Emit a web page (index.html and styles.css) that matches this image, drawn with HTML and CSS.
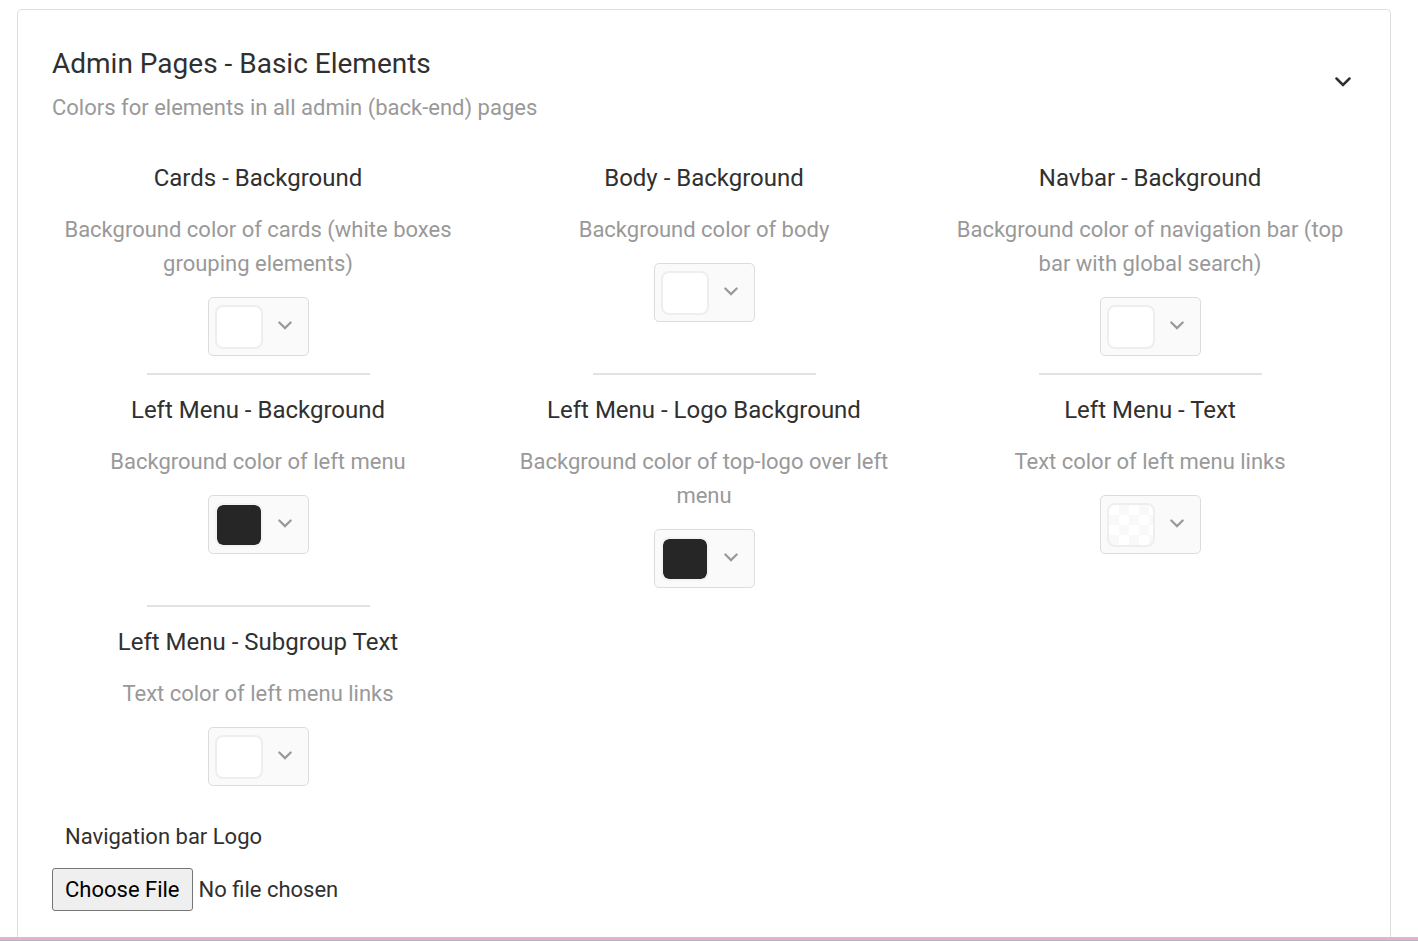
FILE: index.html
```html
<!DOCTYPE html>
<html lang="en">
<head>
<meta charset="utf-8">
<meta name="viewport" content="width=device-width, initial-scale=1">
<title>Admin Pages - Basic Elements</title>
<link rel="stylesheet" href="styles.css">
</head>
<body>
<svg class="sprite" aria-hidden="true">
  <symbol id="chevron" viewBox="0 0 16 10"><path d="M1.500 1.500 8 8l6.500-6.500" fill="none" stroke="currentColor" stroke-width="2.500" stroke-linecap="round"/></symbol>
</svg>
<main class="card">
  <header class="card-header">
    <div>
      <h1 class="card-title">Admin Pages - Basic Elements</h1>
      <p class="card-subtitle">Colors for elements in all admin (back-end) pages</p>
    </div>
    <button class="collapse" type="button" aria-label="Collapse section"><svg class="collapse-icon"><use href="#chevron"/></svg></button>
  </header>
  <div class="options">
    <section class="option">
      <h2 class="option-title">Cards - Background</h2>
      <p class="option-text">Background color of cards (white boxes grouping elements)</p>
      <button class="picker" type="button" aria-label="Cards background color"><span class="swatch"></span><svg class="picker-icon"><use href="#chevron"/></svg></button>
      <hr class="divider">
    </section>
    <section class="option">
      <h2 class="option-title">Body - Background</h2>
      <p class="option-text">Background color of body</p>
      <button class="picker" type="button" aria-label="Body background color"><span class="swatch"></span><svg class="picker-icon"><use href="#chevron"/></svg></button>
      <hr class="divider">
    </section>
    <section class="option">
      <h2 class="option-title">Navbar - Background</h2>
      <p class="option-text">Background color of navigation bar (top bar with global search)</p>
      <button class="picker" type="button" aria-label="Navbar background color"><span class="swatch"></span><svg class="picker-icon"><use href="#chevron"/></svg></button>
      <hr class="divider">
    </section>
    <section class="option">
      <h2 class="option-title">Left Menu - Background</h2>
      <p class="option-text">Background color of left menu</p>
      <button class="picker" type="button" aria-label="Left menu background color"><span class="swatch swatch-dark"></span><svg class="picker-icon"><use href="#chevron"/></svg></button>
      <hr class="divider">
    </section>
    <section class="option">
      <h2 class="option-title">Left Menu - Logo Background</h2>
      <p class="option-text">Background color of top-logo over left menu</p>
      <button class="picker" type="button" aria-label="Logo background color"><span class="swatch swatch-dark"></span><svg class="picker-icon"><use href="#chevron"/></svg></button>
    </section>
    <section class="option">
      <h2 class="option-title">Left Menu - Text</h2>
      <p class="option-text">Text color of left menu links</p>
      <button class="picker" type="button" aria-label="Left menu text color"><span class="swatch swatch-clear"></span><svg class="picker-icon"><use href="#chevron"/></svg></button>
    </section>
    <section class="option">
      <h2 class="option-title">Left Menu - Subgroup Text</h2>
      <p class="option-text">Text color of left menu links</p>
      <button class="picker" type="button" aria-label="Subgroup text color"><span class="swatch"></span><svg class="picker-icon"><use href="#chevron"/></svg></button>
    </section>
  </div>
  <div class="upload">
    <label class="upload-label" for="logo">Navigation bar Logo</label>
    <input class="upload-input" id="logo" type="file">
  </div>
</main>
<div class="bottom-bar"></div>
</body>
</html>
```
FILE: styles.css
```css
* {
  box-sizing: border-box;
}

body {
  margin: 0;
  min-height: 100vh;
  display: flex;
  flex-direction: column;
  background: #fff;
  color: #303030;
  font-family: Roboto, sans-serif;
  font-size: 22px;
  line-height: 34px;
}

h1, h2, p {
  margin: 0;
  font-weight: 400;
}

.sprite {
  position: absolute;
  width: 0;
  height: 0;
}

.card {
  flex: 1;
  margin: 9px 27px 0 17px;
  padding: 34px 17px 26px;
  border: 1px solid #dedede;
  border-bottom: 0;
  border-radius: 5px 5px 0 0;
}

.card-header {
  display: flex;
  justify-content: space-between;
  align-items: center;
  padding: 0 17px;
  margin-bottom: 36px;
}

.card-title {
  font-size: 28px;
  line-height: 40px;
  margin-bottom: 7px;
}

.card-subtitle,
.option-text {
  color: #999;
}

.collapse {
  display: flex;
  padding: 12px 5px 18px;
  border: 0;
  background: none;
  color: #303030;
}

.collapse-icon {
  width: 16px;
  height: 10px;
}

.options {
  display: grid;
  grid-template-columns: repeat(3, 1fr);
  row-gap: 18px;
}

.option {
  display: flex;
  flex-direction: column;
  align-items: center;
  padding: 0 13px;
  text-align: center;
}

.option-title {
  font-size: 24px;
  margin-bottom: 18px;
}

.option-text {
  margin-bottom: 16px;
}

.picker {
  display: flex;
  align-items: center;
  gap: 15px;
  height: 59px;
  margin-bottom: 17px;
  padding: 0 16px 0 6px;
  border: 1px solid #dcdcdc;
  border-radius: 5px;
  background: #fafafa;
  color: #999;
}

.picker:last-child {
  margin-bottom: 19px;
}

.picker-icon {
  width: 14px;
  height: 9px;
  margin-bottom: 3px;
}

.swatch {
  width: 48px;
  height: 44px;
  border: 2px solid #eee;
  border-radius: 8px;
  background: #fff;
}

.swatch-dark {
  border-color: #f3f3f3;
  background: #262626 padding-box;
}

.swatch-clear {
  background: repeating-conic-gradient(#f9f9f9 0 25%, #fff 0 50%) 0 0 / 20px 20px;
}

.divider {
  width: calc(50% + 13px);
  height: 2px;
  margin: auto 0 0;
  border: 0;
  background: #e2e2e2;
}

.upload {
  padding: 0 17px;
  margin-top: 15px;
}

.upload-label {
  display: block;
  padding-left: 13px;
  margin-bottom: 14px;
}

.upload-input {
  display: block;
  width: 100%;
  font: inherit;
  color: inherit;
}

.upload-input::file-selector-button {
  height: 43px;
  padding: 0 12px;
  margin-right: 6px;
  border: 1px solid #767676;
  border-radius: 3px;
  background: #efefef;
  color: #000;
  font: inherit;
}

.bottom-bar {
  height: 4px;
  background: #efb0c6;
  border-bottom: 1px solid #aab6c2;
}
```
